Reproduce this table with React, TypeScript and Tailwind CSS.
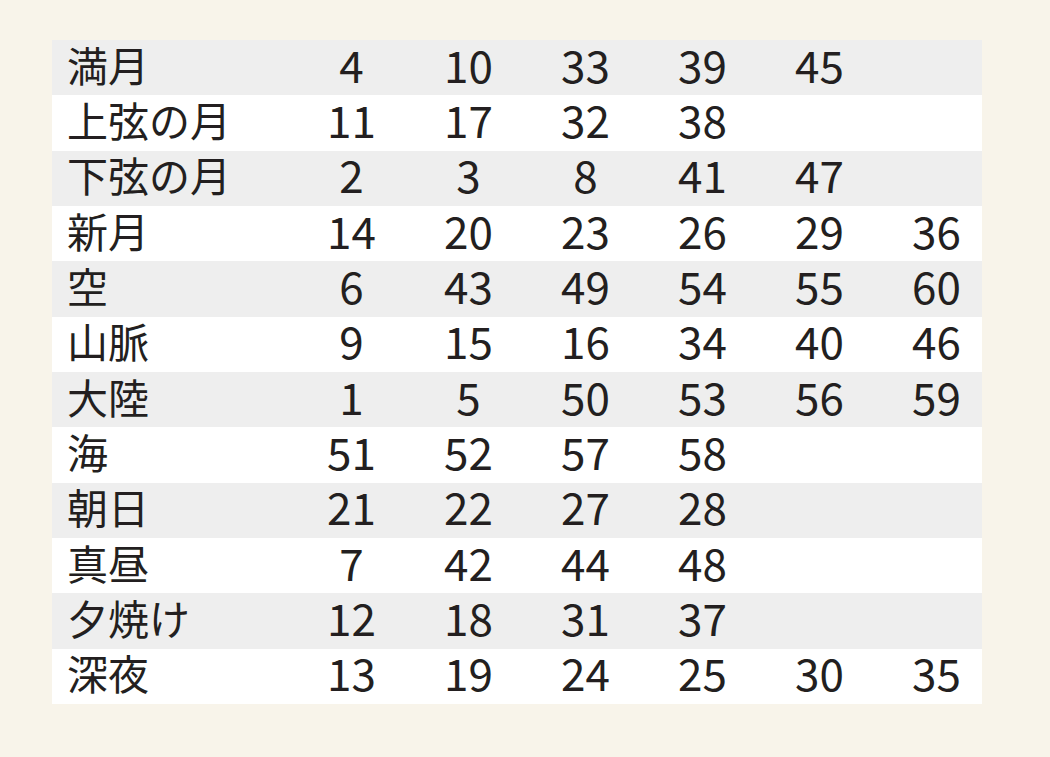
import React from "react";

const rows: [string, number[]][] = [
  ["満月", [4, 10, 33, 39, 45]],
  ["上弦の月", [11, 17, 32, 38]],
  ["下弦の月", [2, 3, 8, 41, 47]],
  ["新月", [14, 20, 23, 26, 29, 36]],
  ["空", [6, 43, 49, 54, 55, 60]],
  ["山脈", [9, 15, 16, 34, 40, 46]],
  ["大陸", [1, 5, 50, 53, 56, 59]],
  ["海", [51, 52, 57, 58]],
  ["朝日", [21, 22, 27, 28]],
  ["真昼", [7, 42, 44, 48]],
  ["夕焼け", [12, 18, 31, 37]],
  ["深夜", [13, 19, 24, 25, 30, 35]],
];

export default function App() {
  return (
    <div
      className="min-h-screen w-full bg-[#f8f4ea] pt-[40px] pl-[52px] text-[#231f20]"
      style={{ fontFamily: '"Noto Sans CJK JP", "Noto Sans", sans-serif' }}
    >
      <div className="w-[930px] flex flex-col overflow-hidden">
        {rows.map(([label, nums], i) => (
          <div
            key={label}
            className={`h-[55.33px] w-[943px] grid grid-cols-[241px_repeat(6,117px)] items-center pb-[8px] ${
              i % 2 === 0 ? "bg-[#eeeeee]" : "bg-white"
            }`}
          >
            <div className="pl-[15px] text-[41px] leading-[44px] whitespace-nowrap">{label}</div>
            {Array.from({ length: 6 }).map((_, j) => (
              <div key={j} className="text-center text-[44px] leading-[44px]">
                {nums[j] !== undefined ? nums[j] : ""}
              </div>
            ))}
          </div>
        ))}
      </div>
    </div>
  );
}
